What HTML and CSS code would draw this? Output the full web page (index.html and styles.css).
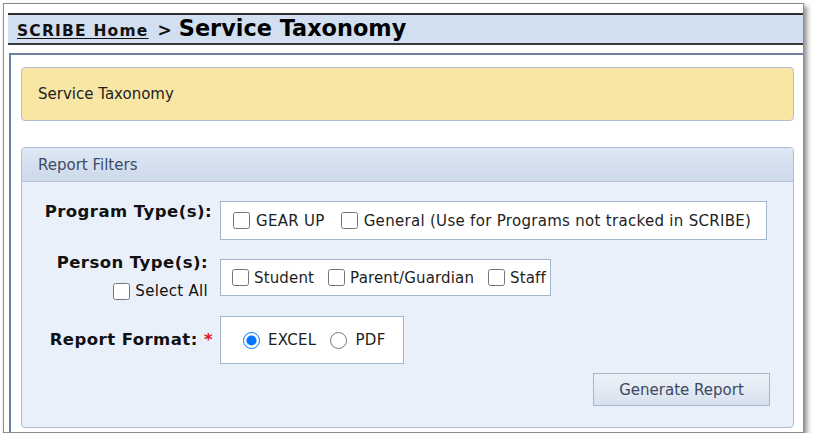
FILE: index.html
```html
<!DOCTYPE html>
<html>
<head>
<meta charset="utf-8">
<link rel="stylesheet" href="styles.css">
</head>
<body>
<div class="frame">
  <div class="titlebar">
    <a class="home-link" href="#">SCRIBE Home</a>
    <span class="sep">&gt;</span>
    <span class="page-title">Service Taxonomy</span>
  </div>
  <div class="content">
    <div class="notice">Service Taxonomy</div>
    <div class="panel">
      <div class="panel-head">Report Filters</div>
      <div class="panel-body">
        <div class="form-grid">
          <div class="label label-top">Program Type(s):</div>
          <div class="box box-program">
            <label class="opt"><input type="checkbox"><span>GEAR UP</span></label>
            <label class="opt"><input type="checkbox"><span>General (Use for Programs not tracked in SCRIBE)</span></label>
          </div>

          <div class="label label-stack">
            <div>Person Type(s):</div>
            <label class="select-all"><input type="checkbox"><span>Select All</span></label>
          </div>
          <div class="box box-person">
            <label class="opt"><input type="checkbox"><span>Student</span></label>
            <label class="opt"><input type="checkbox"><span>Parent/Guardian</span></label>
            <label class="opt"><input type="checkbox"><span>Staff</span></label>
          </div>

          <div class="label label-mid">Report Format: <span class="req">*</span></div>
          <div class="box box-radio">
            <label class="opt"><input type="radio" name="fmt" checked><span>EXCEL</span></label>
            <label class="opt"><input type="radio" name="fmt"><span>PDF</span></label>
          </div>
        </div>
        <div class="actions">
          <button class="btn" type="button">Generate Report</button>
        </div>
      </div>
    </div>
  </div>
</div>
</body>
</html>
```

FILE: styles.css
```css
html, body {
  margin: 0;
  padding: 0;
  background: #ffffff;
}

body {
  font-family: "DejaVu Sans", Verdana, sans-serif;
  font-size: 15px;
  color: #1e1e1e;
}

.frame {
  box-sizing: border-box;
  margin: 3px 0 0 3px;
  width: 801px;
  height: 430px;
  border: 1px solid #8c8c8c;
  box-shadow: 3px 3px 5px rgba(0, 0, 0, 0.45);
  padding: 9px 0 0 4px;
  background: #ffffff;
  display: flex;
  flex-direction: column;
  overflow: hidden;
}

.titlebar {
  box-sizing: border-box;
  height: 32px;
  border-top: 2px solid #2f2f2f;
  border-bottom: 2px solid #3a3a3a;
  background: #d1dff0;
  display: flex;
  align-items: baseline;
  padding: 0 0 0 9px;
  line-height: 27px;
}

.home-link {
  font-weight: bold;
  font-size: 15.5px;
  letter-spacing: 1.2px;
  color: #111111;
  text-decoration: underline;
  text-underline-offset: 2px;
}

.sep {
  font-weight: bold;
  font-size: 17px;
  color: #111111;
  margin: 0 7px 0 9px;
}

.page-title {
  font-weight: bold;
  font-size: 22.4px;
  color: #000000;
}

.content {
  flex: 1;
  margin: 8px 0 0 1px;
  border-top: 2px solid #6d809c;
  border-left: 2px solid #6d809c;
  padding: 12px 9px 0 10px;
}

.notice {
  box-sizing: border-box;
  height: 54px;
  background: #f8e6a5;
  border: 1px solid #aebdd0;
  border-radius: 4px;
  padding: 0 0 0 16px;
  display: flex;
  align-items: center;
  color: #222222;
}

.panel {
  box-sizing: border-box;
  margin-top: 26px;
  height: 281px;
  border: 1px solid #aebdd2;
  border-radius: 4px;
  background: #eaf0fa;
  overflow: hidden;
}

.panel-head {
  box-sizing: border-box;
  height: 34px;
  background: linear-gradient(#dfe8f4, #ccd9ea);
  border-bottom: 1px solid #b6c5d8;
  padding-left: 16px;
  display: flex;
  align-items: center;
  color: #3d4a66;
}

.panel-body {
  padding: 19px 0 0 0;
}

.form-grid {
  display: grid;
  grid-template-columns: 190px auto;
  column-gap: 8px;
  row-gap: 19px;
  justify-items: start;
}

.label {
  justify-self: end;
  font-weight: bold;
  font-size: 16.5px;
  letter-spacing: 0.45px;
  color: #111111;
  text-align: right;
  white-space: nowrap;
}

.label-top {
  align-self: start;
  line-height: 21px;
}

.label-stack {
  align-self: start;
  display: flex;
  flex-direction: column;
  align-items: flex-end;
  line-height: 20px;
  gap: 8px;
  margin: -6px 4px -12px 0;
}

.label-mid {
  align-self: center;
  margin-right: -1px;
}

.req {
  color: #e8101a;
}

.select-all {
  font-weight: normal;
  font-size: 15px;
  letter-spacing: 0.3px;
  display: flex;
  align-items: center;
  gap: 5px;
}

.box {
  box-sizing: border-box;
  background: #ffffff;
  border: 1px solid #a3b4cf;
  display: flex;
  align-items: center;
  gap: 16px;
  padding: 0 12px;
  height: 39px;
  letter-spacing: 0.3px;
}

.box-program {
  padding-right: 15px;
}

.box-person {
  height: 37px;
  gap: 14px;
  padding: 0 4px 0 11px;
  letter-spacing: 0.15px;
}

.box-radio {
  height: 48px;
  margin-top: 1px;
  padding: 0 17px 0 22px;
  gap: 14px;
}

.box-radio .opt {
  gap: 8px;
}

.opt {
  display: flex;
  align-items: center;
  gap: 6px;
  white-space: nowrap;
}

.box-person .opt {
  gap: 5px;
}

input[type="checkbox"],
input[type="radio"] {
  margin: 0;
  width: 17px;
  height: 17px;
}

.actions {
  display: flex;
  justify-content: flex-end;
  padding: 9px 23px 0 0;
}

.btn {
  box-sizing: border-box;
  width: 177px;
  height: 33px;
  font-family: "DejaVu Sans", Verdana, sans-serif;
  font-size: 15px;
  color: #3c4862;
  background: linear-gradient(#edf2f9, #d7e1ee);
  border: 1px solid #a6b6cb;
  border-radius: 0;
}
```
